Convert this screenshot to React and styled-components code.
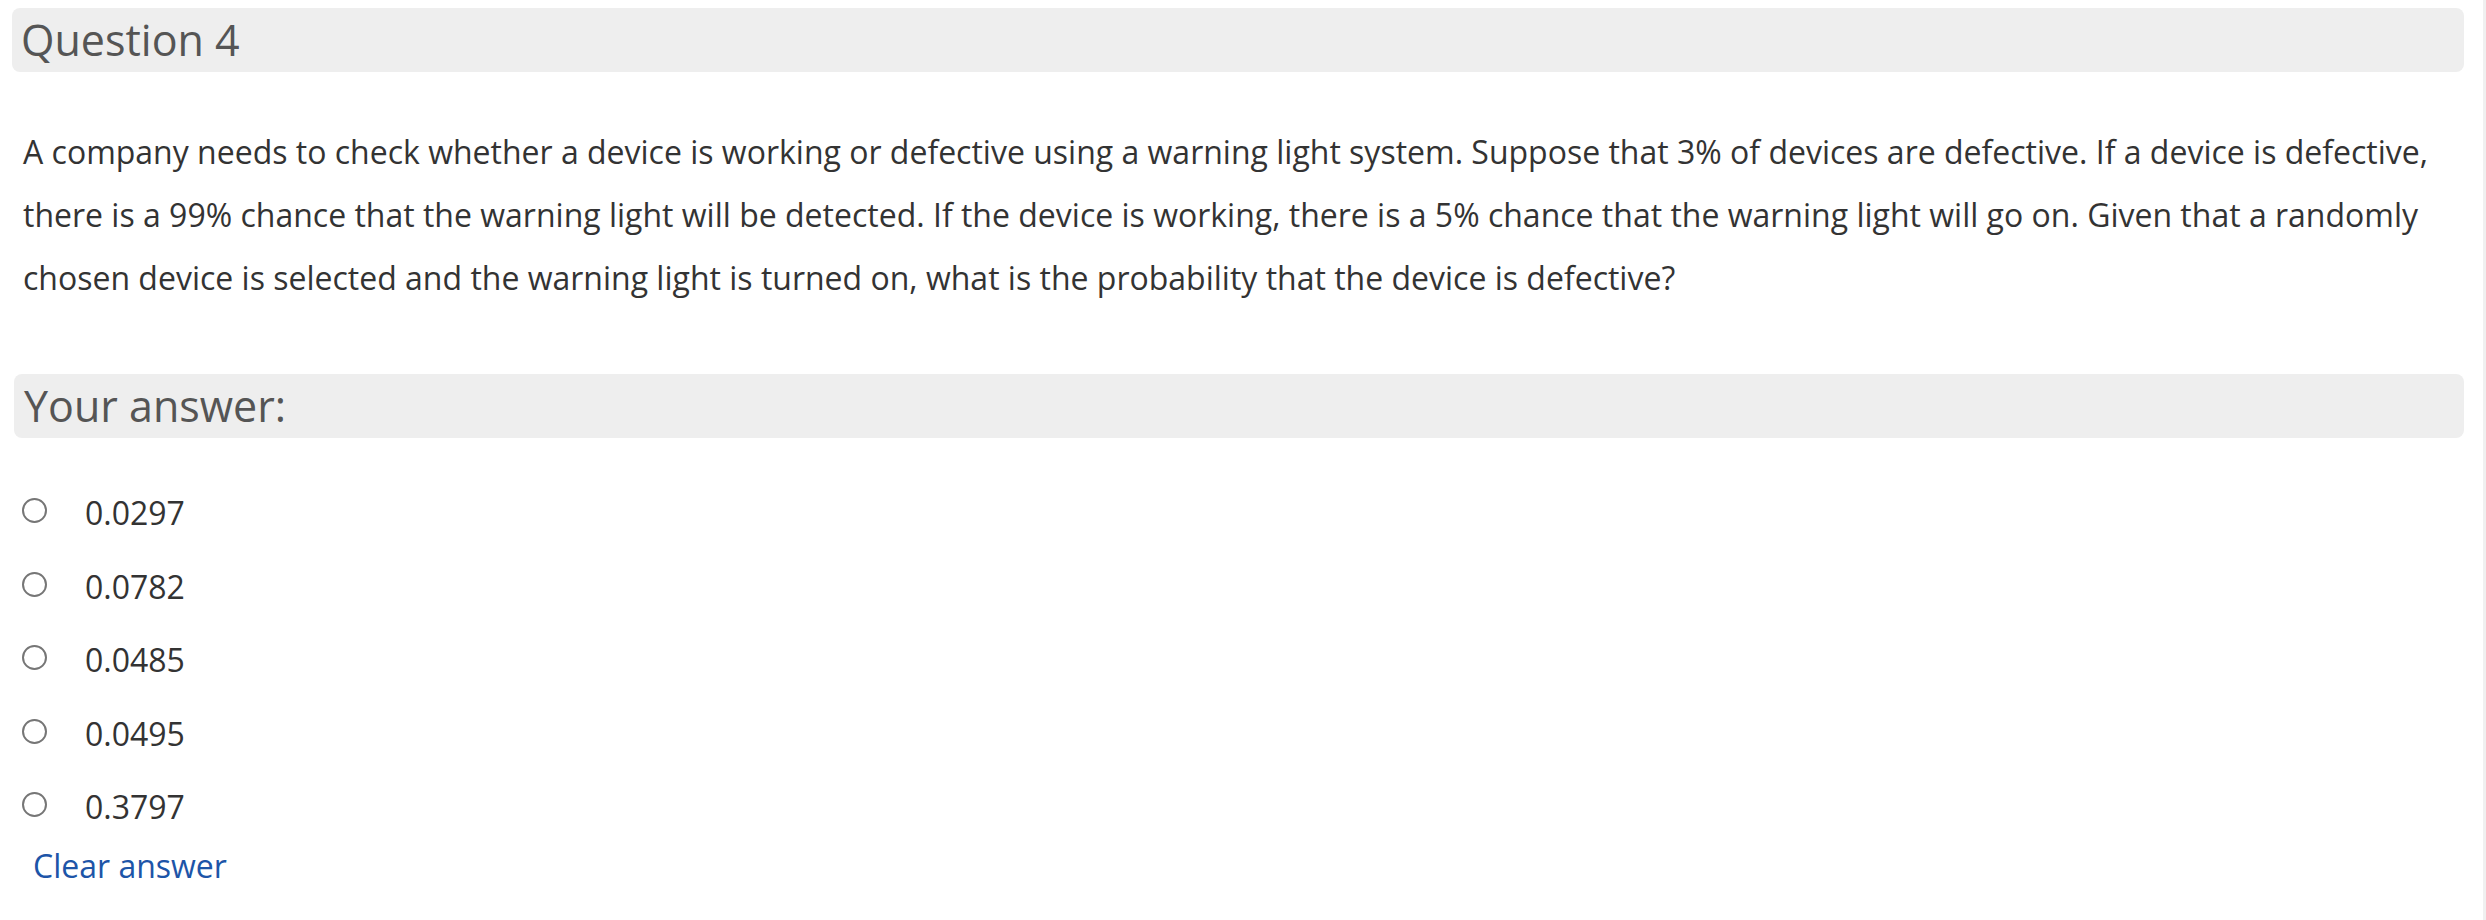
import React, { useState } from "react";
import styled, { createGlobalStyle } from "styled-components";

const GlobalStyle = createGlobalStyle`
  html, body {
    margin: 0;
    padding: 0;
    background: #ffffff;
  }
  body {
    font-family: "Open Sans", "Noto Sans", sans-serif;
    color: #333333;
  }
`;

const Page = styled.div`
  box-sizing: border-box;
  min-height: 100vh;
  padding: 8px 19px 0 12px;
  border-right: 3px solid #f0f0f0;
`;

const SectionTitle = styled.h2`
  margin: ${(p) => p.$top || 0}px 0 0 ${(p) => p.$left || 0}px;
  height: 64px;
  padding: 0 ${(p) => p.$pad || 9}px;
  background: #eeeeee;
  border-radius: 8px;
  font-size: ${(p) => p.$size}px;
  font-weight: 400;
  line-height: 64px;
  color: #555555;
  white-space: nowrap;
`;

const QuestionText = styled.p`
  margin: 48px 0 0;
  padding: 0 0 0 11px;
  font-size: 32px;
  line-height: 63px;
  color: #333333;
`;

const Options = styled.div`
  display: flex;
  flex-direction: column;
  margin-top: 38px;
  padding-left: 10px;
`;

const OptionRow = styled.label`
  display: flex;
  align-items: center;
  height: 73.5px;
  font-size: 32px;
  color: #333333;
  cursor: pointer;
`;

const Radio = styled.span`
  box-sizing: border-box;
  width: 25px;
  height: 25px;
  margin: -4px 38px 0 0;
  border: 2px solid #767676;
  border-radius: 50%;
  display: flex;
  align-items: center;
  justify-content: center;
  flex-shrink: 0;

  &::after {
    content: "";
    width: 13px;
    height: 13px;
    border-radius: 50%;
    background: ${(p) => (p.$checked ? "#1d56a8" : "transparent")};
  }
`;

const ClearLink = styled.a`
  display: inline-block;
  margin: 0 0 0 21px;
  font-size: 32px;
  line-height: 44px;
  color: #1d55a8;
  text-decoration: none;
  cursor: pointer;
`;

const answers = ["0.0297", "0.0782", "0.0485", "0.0495", "0.3797"];

export default function App() {
  const [selected, setSelected] = useState(null);

  return (
    <>
      <GlobalStyle />
      <Page>
        <SectionTitle $size={43}>Question 4</SectionTitle>
        <QuestionText>
          A company needs to check whether a device is working or defective
          using a warning light system. Suppose that 3% of devices are
          defective. If a device is defective, there is a 99% chance that the
          warning light will be detected. If the device is working, there is a
          5% chance that the warning light will go on. Given that a randomly
          chosen device is selected and the warning light is turned on, what is
          the probability that the device is defective?
        </QuestionText>
        <SectionTitle $size={43} $top={65} $left={2} $pad={10}>
          Your answer:
        </SectionTitle>
        <Options>
          {answers.map((a) => (
            <OptionRow key={a} onClick={() => setSelected(a)}>
              <Radio $checked={selected === a} />
              {a}
            </OptionRow>
          ))}
        </Options>
        <ClearLink onClick={() => setSelected(null)}>Clear answer</ClearLink>
      </Page>
    </>
  );
}
